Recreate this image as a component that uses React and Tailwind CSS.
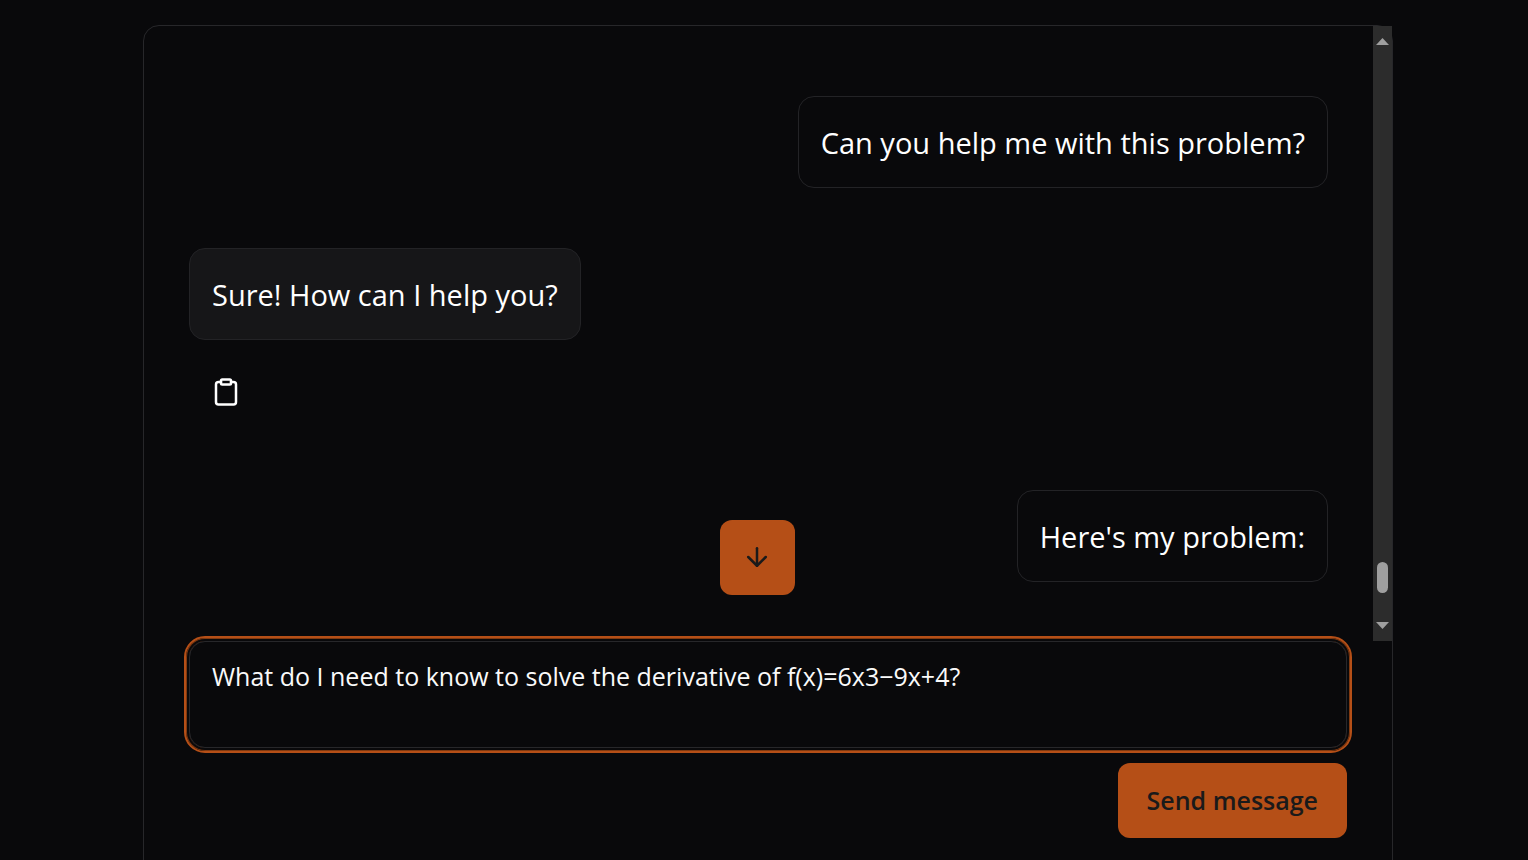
import { useState } from "react";
import { ArrowDown, Clipboard } from "lucide-react";

function Bubble({ from, children }) {
  const tone = from === "user" ? "self-end" : "self-start bg-[#161618]";
  return (
    <p className={`rounded-2xl border border-[#232326] px-[22px] pt-[23px] pb-[21px] text-[29px] leading-[46px] whitespace-nowrap text-white ${tone}`}>
      {children}
    </p>
  );
}

function ScrollTrack() {
  return (
    <div aria-hidden="true" className="flex w-[19px] shrink-0 flex-col items-center justify-between bg-[#2c2c2c] py-3">
      <svg width="13" height="7" viewBox="0 0 13 7" fill="#9f9f9f">
        <path d="M6.5 0 13 7H0Z" />
      </svg>
      <div className="flex grow flex-col justify-end pb-[29px]">
        <div className="h-[31px] w-[11px] rounded-full bg-[#9f9f9f]" />
      </div>
      <svg width="13" height="7" viewBox="0 0 13 7" fill="#9f9f9f">
        <path d="M0 0H13L6.5 7Z" />
      </svg>
    </div>
  );
}

export default function App() {
  const [draft, setDraft] = useState(
    "What do I need to know to solve the derivative of f(x)=6x3−9x+4?"
  );

  return (
    <main className="h-screen overflow-hidden bg-[#09090b] pt-[25px] pr-[135px] pl-[143px] font-['Open_Sans','Noto_Sans',sans-serif]">
      <section className="rounded-2xl border border-[#27272a] pb-[45px]">
        <div className="relative flex h-[615px]">
          <div className="flex min-w-0 grow flex-col overflow-hidden px-[45px] pt-[70px]">
            <Bubble from="user">Can you help me with this problem?</Bubble>
            <div className="mt-[60px] flex flex-col items-start">
              <Bubble from="assistant">Sure! How can I help you?</Bubble>
              <button type="button" aria-label="Copy message" className="mt-4 px-[22px] pt-[21px] pb-[23px] text-white">
                <Clipboard size={30} />
              </button>
            </div>
            <div className="mt-[60px] flex flex-col">
              <Bubble from="user">Here's my problem:</Bubble>
            </div>
          </div>
          <ScrollTrack />
          <div className="pointer-events-none absolute inset-x-0 bottom-[46px] flex justify-center pr-[21px]">
            <button
              type="button"
              aria-label="Scroll to bottom"
              className="pointer-events-auto flex size-[75px] items-center justify-center rounded-xl bg-[#b54f17] pr-px pb-px text-[#1a1a1a]"
            >
              <ArrowDown size={30} />
            </button>
          </div>
        </div>
        <form className="flex flex-col items-end gap-[15px] px-[45px]" onSubmit={(e) => e.preventDefault()}>
          <textarea
            aria-label="Message"
            value={draft}
            onChange={(e) => setDraft(e.target.value)}
            className="block h-[107px] w-full resize-none rounded-2xl border border-[#27272a] px-[22px] py-4 text-[25px] leading-[36px] text-[#fafafa] shadow-[0_0_0_2px_#09090b,0_0_0_3px_#803910] outline-2 outline-offset-3 outline-[#b54f17]"
          />
          <button
            type="submit"
            className="h-[75px] rounded-xl bg-[#b54f17] px-[29px] text-[25px] font-semibold text-[#1a1a1a]"
          >
            Send message
          </button>
        </form>
      </section>
    </main>
  );
}
